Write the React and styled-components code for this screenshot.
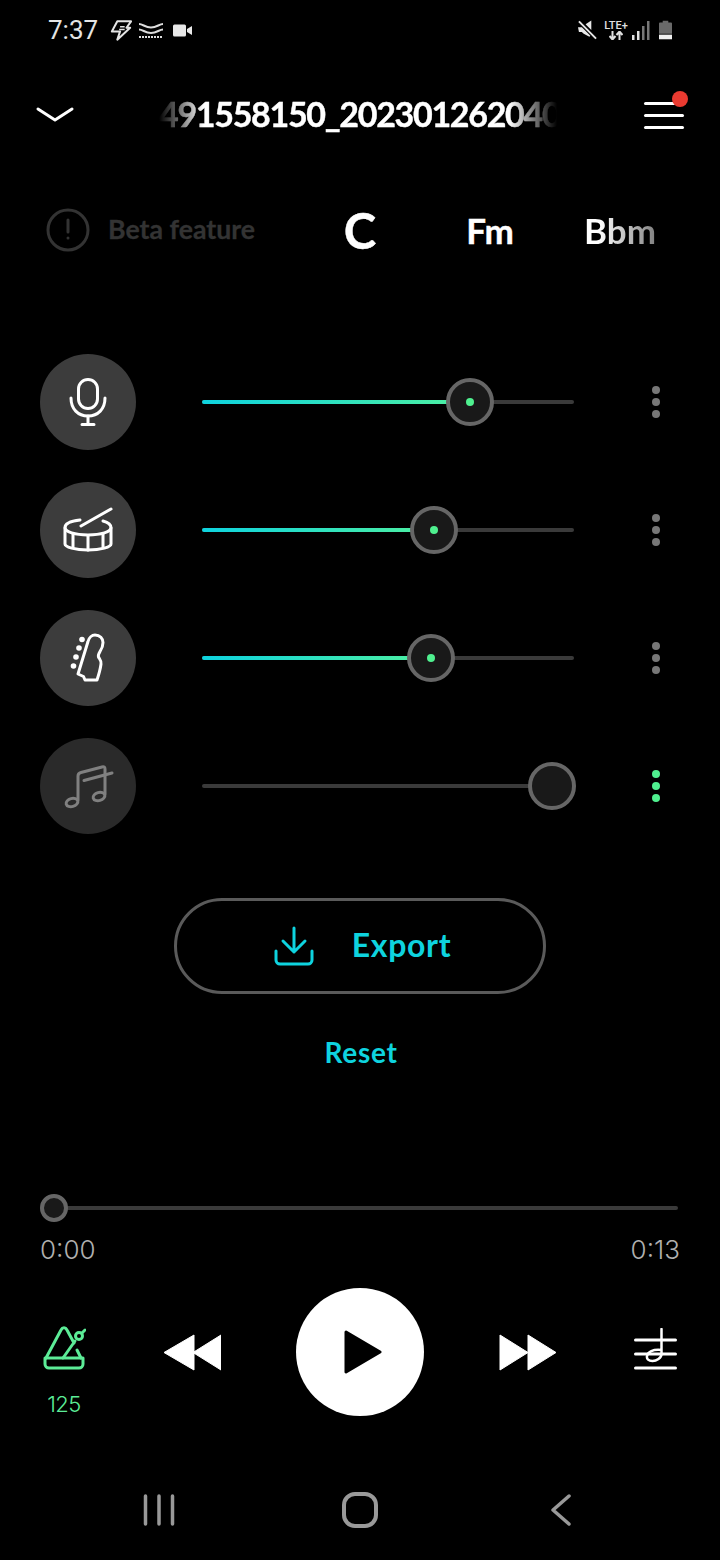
import React from "react";
import styled, { createGlobalStyle } from "styled-components";

const Global = createGlobalStyle`
html, body {
  margin: 0;
  padding: 0;
  background: #000;
}
`

const Screen = styled.div`
width: 720px;
height: 1560px;
background: #000;
overflow: hidden;
display: flex;
flex-direction: column;
font-family: Lato, "Open Sans", sans-serif;
color: #fff;
`

const StatusBar = styled.div`
height: 60px;
display: flex;
align-items: center;
padding: 0 48px;
`

const Clock = styled.span`
font-family: Roboto, sans-serif;
font-size: 26px;
font-weight: 400;
color: #e4e4e4;
width: 62px;
`

const StatusGroup = styled.div`
display: flex;
align-items: center;
gap: ${(p) => p.$gap}px;
margin-left: ${(p) => (p.$right ? "auto" : "0")};
`

const LteBlock = styled.div`
display: flex;
flex-direction: column;
align-items: center;
width: 24px;
margin: 0 0 0 3px;
font-family: Roboto, sans-serif;
font-size: 11px;
font-weight: 500;
line-height: 11px;
color: #e0e0e0;
`

const Header = styled.div`
height: 110px;
display: flex;
align-items: center;
padding: 0 36px;
`

const Title = styled.div`
width: 400px;
margin: 0 auto;
padding-bottom: 3px;
overflow: hidden;
display: flex;
white-space: nowrap;
font-size: 34px;
font-weight: 700;
letter-spacing: -1.3px;
-webkit-text-stroke: 0.4px #fff;
-webkit-mask-image: linear-gradient(90deg, transparent 0, #000 45px, #000 350px, transparent 398px);
mask-image: linear-gradient(90deg, transparent 0, #000 45px, #000 350px, transparent 398px);
`

const TitleText = styled.span`
flex: none;
`

const MenuButton = styled.div`
position: relative;
width: 40px;
height: 27px;
display: flex;
flex-direction: column;
justify-content: space-between;
`

const MenuLine = styled.div`
height: 3px;
border-radius: 2px;
background: #fff;
`

const RedDot = styled.div`
position: absolute;
top: -11px;
right: -4px;
width: 16px;
height: 16px;
border-radius: 50%;
background: #ea3a30;
`

const ChordRow = styled.div`
box-sizing: border-box;
height: 122px;
display: flex;
align-items: center;
padding: 0 0 2px 46px;
`

const Beta = styled.div`
width: 249px;
display: flex;
align-items: center;
gap: 18px;
color: #333;
font-size: 26.700px;
font-weight: 700;
`

const BetaText = styled.span`
padding-bottom: 2px;
-webkit-text-stroke: 0.3px #333;
`

const Chord = styled.div`
width: 130px;
text-align: center;
font-size: ${(p) => (p.$active ? 49 : 35)}px;
font-weight: 700;
line-height: 60px;
-webkit-text-stroke: 0.4px #fff;
`

const ChordFade = styled.span`
background: linear-gradient(90deg, #fff 20%, #808080 100%);
-webkit-background-clip: text;
background-clip: text;
color: transparent;
-webkit-text-stroke: 0;
`

const TrackList = styled.div`
margin-top: 62px;
display: flex;
flex-direction: column;
gap: 32px;
padding-left: 40px;
`

const TrackRow = styled.div`
height: 96px;
display: flex;
align-items: center;
`

const TrackIcon = styled.div`
width: 96px;
height: 96px;
border-radius: 50%;
flex: none;
background: ${(p) => (p.$muted ? "#2a2a2a" : "#3c3c3c")};
`

const Slider = styled.div`
position: relative;
width: 372px;
height: 4px;
margin-left: 66px;
border-radius: 2px;
background: #3a3a3a;
`

const SliderFill = styled.div`
height: 100%;
border-radius: 2px;
background: linear-gradient(90deg, #0ed3df, #4ff0a0);
`

const Thumb = styled.div`
position: absolute;
top: 2px;
width: ${(p) => p.$size}px;
height: ${(p) => p.$size}px;
box-sizing: border-box;
transform: translate(-50%, -50%);
border-radius: 50%;
border: 4px solid #666;
background: #191919;
display: flex;
align-items: center;
justify-content: center;
`

const ThumbDot = styled.div`
width: 8px;
height: 8px;
border-radius: 50%;
background: #4ff08f;
`

const MoreDots = styled.div`
display: flex;
flex-direction: column;
gap: 4px;
margin-left: 78px;
`

const MoreDot = styled.div`
width: 8px;
height: 8px;
border-radius: 50%;
background: ${(p) => (p.$on ? "#4ff08f" : "#777")};
`

const ExportButton = styled.div`
box-sizing: border-box;
width: 372px;
height: 96px;
margin: 64px auto 0;
padding-left: 5px;
border: 3px solid #5a5a5a;
border-radius: 48px;
display: flex;
align-items: center;
justify-content: center;
gap: 38px;
color: #0ed3df;
font-size: 32px;
font-weight: 700;
letter-spacing: 0.7px;
`

const ExportLabel = styled.span`
padding-bottom: 4px;
`

const Reset = styled.div`
height: 40px;
margin-top: 38px;
padding-left: 2px;
text-align: center;
color: #0ed3df;
font-size: 28px;
font-weight: 700;
line-height: 40px;
letter-spacing: 0.7px;
`

const Scrubber = styled.div`
position: relative;
width: 638px;
height: 4px;
margin: 134px 0 0 40px;
background: #3a3a3a;
border-radius: 2px;
`

const Times = styled.div`
display: flex;
justify-content: space-between;
height: 32px;
margin-top: 24px;
padding: 0 40px;
font-family: Inter, sans-serif;
font-size: 26px;
font-weight: 300;
line-height: 32px;
color: #b0b0b0;
`

const Controls = styled.div`
height: 128px;
margin-top: 22px;
padding-left: 40px;
display: flex;
align-items: center;
gap: 75px;
`

const MetroColumn = styled.div`
width: 48px;
height: 128px;
display: flex;
flex-direction: column;
align-items: center;
padding-top: 37px;
box-sizing: border-box;
color: #5cec97;
font-family: Inter, sans-serif;
font-size: 22px;
font-weight: 300;
letter-spacing: -0.5px;
`

const MetroLabel = styled.span`
margin-top: 20px;
`

const PlayButton = styled.div`
width: 128px;
height: 128px;
border-radius: 50%;
background: #fff;
flex: none;
display: flex;
align-items: center;
justify-content: center;
`

const NavBar = styled.div`
margin-top: 64px;
height: 60px;
display: grid;
grid-template-columns: repeat(3, 201px);
justify-content: center;
align-items: center;
justify-items: center;
`

const Svg = styled.svg`
display: block;
flex: none;
`

const BatterySvg = styled(Svg)`
margin-left: 5px;
`

const PlaySvg = styled(Svg)`
margin-left: 7px;
`

const ScoreSvg = styled(Svg)`
margin-left: 2px;
`

function BoltIcon() {
  return (
    <Svg width="22" height="23" viewBox="0 0 24 24" fill="none" stroke="#e4e4e4" strokeWidth="2.200" strokeLinejoin="round">
      <path d="M8 2h15l-5 7h4L8 22l3-9H2z" />
      <path d="M11 8h5M10 11h6" strokeWidth="1.600" />
    </Svg>
  );
}

function WavesIcon() {
  return (
    <Svg width="27" height="15" viewBox="0 0 27 15" fill="none" stroke="#ddd" strokeWidth="2">
      <path d="M0 1c4 0 6 3.500 12 3.500S20 1 24 1" />
      <path d="M0 6.500c4 0 6 3.500 12 3.500s8-3.500 12-3.500" />
      <path d="M0 14h24" strokeDasharray="2 1" />
    </Svg>
  );
}

function CameraIcon() {
  return (
    <Svg width="19" height="13" viewBox="0 0 19 13" fill="#e8e8e8">
      <rect x="0" y="0.500" width="13" height="12" rx="1.500" />
      <path d="M14 5l5-3v9l-5-3z" />
    </Svg>
  );
}

function MuteIcon() {
  return (
    <Svg width="19" height="20" viewBox="0 0 20 20" fill="#e8e8e8">
      <path d="M0 7h4l2 2 7 7-1 1-6-3-2-2H1z" />
      <path d="M8 4l6-4v10z" />
      <path d="M1 1l18 18" stroke="#e8e8e8" strokeWidth="2" />
    </Svg>
  );
}

function TransferArrows() {
  return (
    <Svg width="14" height="9" viewBox="0 0 14 9" fill="none" stroke="#e0e0e0" strokeWidth="2">
      <path d="M3.500 0v8M0.500 5l3 3.500L6.500 5" />
      <path d="M10.500 9V1M7.500 4l3-3.500 3 3.500" />
    </Svg>
  );
}

function SignalIcon() {
  return (
    <Svg width="18" height="20" viewBox="0 0 18 20">
      <rect x="0" y="15" width="2.500" height="5" fill="#e0e0e0" />
      <rect x="5" y="11" width="2.500" height="9" fill="#e0e0e0" />
      <rect x="10" y="6" width="2.500" height="14" fill="#777" />
      <rect x="15" y="1" width="2.500" height="19" fill="#777" />
    </Svg>
  );
}

function BatteryIcon() {
  return (
    <BatterySvg width="13" height="20" viewBox="0 0 14 20">
      <path d="M4 0h6v2h3a1 1 0 0 1 1 1v11H0V3a1 1 0 0 1 1-1h3z" fill="#6a6a6a" />
      <rect x="0" y="15" width="14" height="5" fill="#f0f0f0" />
    </BatterySvg>
  );
}

function ChevronDown() {
  return (
    <Svg width="38" height="16" viewBox="0 0 38 16" fill="none" stroke="#fff" strokeWidth="3" strokeLinecap="round" strokeLinejoin="round">
      <path d="M2 2l17 11L36 2" />
    </Svg>
  );
}

function BetaIcon() {
  return (
    <Svg width="44" height="44" viewBox="0 0 44 44" fill="none" stroke="#333" strokeWidth="3">
      <circle cx="22" cy="22" r="20" />
      <path d="M22 12v12" strokeLinecap="round" />
      <circle cx="22" cy="30" r="1.500" fill="#333" stroke="none" />
    </Svg>
  );
}

function MicIcon() {
  return (
    <Svg width="96" height="96" viewBox="0 0 96 96" fill="none" stroke="#fff" strokeWidth="3" strokeLinecap="round">
      <rect x="38.500" y="25.500" width="19" height="29" rx="9.500" />
      <path d="M31 44c0 11 7 18 17 18s17-7 17-18" />
      <path d="M48 62v8M42 70.500h12" />
    </Svg>
  );
}

function DrumIcon() {
  return (
    <Svg width="96" height="96" viewBox="0 0 96 96" fill="none" stroke="#fff" strokeWidth="3" strokeLinecap="round" strokeLinejoin="round">
      <path d="M41 44L71 27" />
      <path d="M40 38c-9 1-15 3.500-15 7.500 0 4.500 10 7.500 23 7.500s23-3 23-7.500c0-3-3-5-8-6.500" />
      <path d="M25 46v16c0 3 10 6 23 6s23-3 23-6V46" />
      <path d="M33 52v13M48 54v14M63 52v13" />
    </Svg>
  );
}

function GuitarIcon() {
  return (
    <Svg width="96" height="96" viewBox="0 0 96 96" fill="none" stroke="#fff" strokeWidth="3" strokeLinejoin="round">
      <path d="M45 70l-1.500-3.500-5.500-2.500 10-32.500c1-4 4-6.500 7-6.500 5 0 8 3.500 8 7.500 0 3-1 6-3 9-1.500 2.500-2 4-1.500 5.500 1 2 3 3.500 2.500 7-.5 4-2 10-4 16z" />
      <g fill="#fff" stroke="none">
        <circle cx="42" cy="29.500" r="2.800" />
        <circle cx="39" cy="38" r="2.800" />
        <circle cx="36" cy="47" r="2.800" />
        <circle cx="33.500" cy="56" r="2.800" />
      </g>
    </Svg>
  );
}

function NotesIcon() {
  return (
    <Svg width="96" height="96" viewBox="0 0 96 96" fill="none" stroke="#808080" strokeWidth="3" strokeLinecap="round" strokeLinejoin="round">
      <path d="M38 62V38c0-2 1-3 3-3.500L62 29c2-.5 3 0 3 2v25" />
      <path d="M44 42.500L72 35" />
      <ellipse cx="32" cy="64.500" rx="6" ry="4" transform="rotate(-15 32 64.500)" />
      <ellipse cx="59" cy="58.500" rx="6" ry="4" transform="rotate(-15 59 58.500)" />
    </Svg>
  );
}

function DownloadIcon() {
  return (
    <Svg width="40" height="40" viewBox="0 0 40 40" fill="none" stroke="#0ed3df" strokeWidth="3" strokeLinecap="round" strokeLinejoin="round">
      <path d="M20 2v24M9 15l11 11 11-11" />
      <path d="M2 25v9a4 4 0 0 0 4 4h28a4 4 0 0 0 4-4v-9" />
    </Svg>
  );
}

function MetronomeIcon() {
  return (
    <Svg width="44" height="46" viewBox="0 0 44 46" fill="none" stroke="#5cec97" strokeWidth="3" strokeLinecap="round" strokeLinejoin="round">
      <path d="M4 33L19 5c1.500-3 4.500-3 6 0l7 13M39 33l-4-8" />
      <path d="M3 33h38v6a4 4 0 0 1-4 4H7a4 4 0 0 1-4-4z" />
      <path d="M21 33l12-17" />
      <circle cx="37" cy="11" r="3.500" />
      <path d="M40 8l3-3" />
    </Svg>
  );
}

function SkipIcon({ back }) {
  const points = back
    ? "M1 18.500L31 1v35zM30 18.500L58 1v35z"
    : "M1 1l28 17.500L1 36zM29 1l28 17.500L29 36z";
  return (
    <Svg width="58" height="37" viewBox="0 0 58 37" fill="#fff" stroke="#fff" strokeWidth="1" strokeLinejoin="round">
      <path d={points} />
    </Svg>
  );
}

function PlayIcon() {
  return (
    <PlaySvg width="40" height="44" viewBox="0 0 40 44" fill="#000" stroke="#000" strokeWidth="3" strokeLinejoin="round">
      <path d="M2 2l34 20L2 42z" />
    </PlaySvg>
  );
}

function ScoreIcon() {
  return (
    <ScoreSvg width="44" height="48" viewBox="0 0 44 48" fill="none" stroke="#fff" strokeWidth="3" strokeLinecap="round">
      <path d="M1.500 12h40M1.500 26h40M1.500 40h40" />
      <path d="M27.500 1v25c0 4-5 7-9 7-4 0-6-2-5.500-5 .5-4 6-7 14.500-6" strokeWidth="2.500" />
    </ScoreSvg>
  );
}

function NavRecents() {
  return (
    <Svg width="32" height="32" viewBox="0 0 32 32" stroke="#999" strokeWidth="3.500" strokeLinecap="round">
      <path d="M2.500 2v28M16 2v28M29.500 2v28" />
    </Svg>
  );
}

function NavHome() {
  return (
    <Svg width="36" height="36" viewBox="0 0 36 36" fill="none" stroke="#999" strokeWidth="4">
      <rect x="2" y="2" width="32" height="32" rx="11" />
    </Svg>
  );
}

function NavBack() {
  return (
    <Svg width="20" height="32" viewBox="0 0 20 32" fill="none" stroke="#999" strokeWidth="3.500" strokeLinecap="round" strokeLinejoin="round">
      <path d="M18 2L2 16l16 14" />
    </Svg>
  );
}

const tracks = [
  { id: "vocals", icon: <MicIcon />, value: 72 },
  { id: "drums", icon: <DrumIcon />, value: 62.4 },
  { id: "guitar", icon: <GuitarIcon />, value: 61.6 },
  { id: "other", icon: <NotesIcon />, value: 94.1, muted: true },
];

export default function App() {
  return (
    <Screen>
      <Global />
      <StatusBar>
        <Clock>7:37</Clock>
        <StatusGroup $gap={7}>
          <BoltIcon />
          <WavesIcon />
          <CameraIcon />
        </StatusGroup>
        <StatusGroup $gap={4} $right>
          <MuteIcon />
          <LteBlock>
            LTE+
            <TransferArrows />
          </LteBlock>
          <SignalIcon />
          <BatteryIcon />
        </StatusGroup>
      </StatusBar>

      <Header>
        <ChevronDown />
        <Title>
          <TitleText>491558150_202301262040</TitleText>
        </Title>
        <MenuButton>
          <MenuLine />
          <MenuLine />
          <MenuLine />
          <RedDot />
        </MenuButton>
      </Header>

      <ChordRow>
        <Beta>
          <BetaIcon />
          <BetaText>Beta feature</BetaText>
        </Beta>
        <Chord $active>C</Chord>
        <Chord>Fm</Chord>
        <Chord><ChordFade>Bbm</ChordFade></Chord>
      </ChordRow>

      <TrackList>
        {tracks.map((t) => (
          <TrackRow key={t.id}>
            <TrackIcon $muted={t.muted}>{t.icon}</TrackIcon>
            <Slider>
              {!t.muted && <SliderFill style={{ width: `${t.value}%` }} />}
              <Thumb $size={48} style={{ left: `${t.value}%` }}>
                {!t.muted && <ThumbDot />}
              </Thumb>
            </Slider>
            <MoreDots>
              <MoreDot $on={t.muted} />
              <MoreDot $on={t.muted} />
              <MoreDot $on={t.muted} />
            </MoreDots>
          </TrackRow>
        ))}
      </TrackList>

      <ExportButton>
        <DownloadIcon />
        <ExportLabel>Export</ExportLabel>
      </ExportButton>
      <Reset>Reset</Reset>

      <Scrubber>
        <Thumb $size={28} style={{ left: "14px" }} />
      </Scrubber>
      <Times>
        <span>0:00</span>
        <span>0:13</span>
      </Times>

      <Controls>
        <MetroColumn>
          <MetronomeIcon />
          <MetroLabel>125</MetroLabel>
        </MetroColumn>
        <SkipIcon back />
        <PlayButton>
          <PlayIcon />
        </PlayButton>
        <SkipIcon />
        <ScoreIcon />
      </Controls>

      <NavBar>
        <NavRecents />
        <NavHome />
        <NavBack />
      </NavBar>
    </Screen>
  );
}
